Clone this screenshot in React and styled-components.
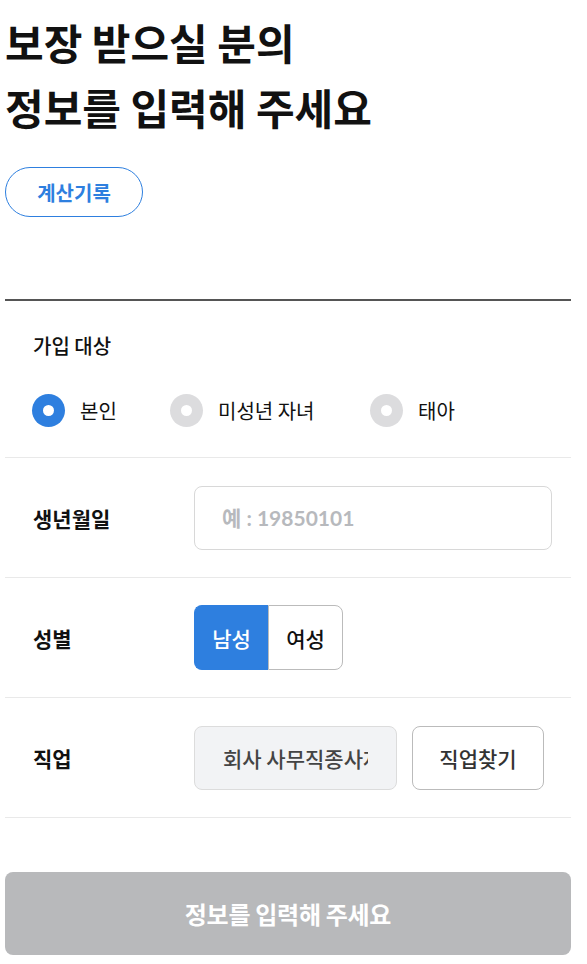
import React, { useState } from 'react';
import styled, { createGlobalStyle } from 'styled-components';

const BLUE = '#2e7fdf';

const GlobalStyle = createGlobalStyle`
  html, body {
    margin: 0;
    padding: 0;
    background: #fff;
  }
  body {
    font-family: 'Noto Sans CJK KR', 'Noto Sans', sans-serif;
    color: #111;
  }
  * {
    box-sizing: border-box;
  }
`;

const Page = styled.div`
  width: 587px;
  padding: 9px 16px 0 5px;
`;

const Title = styled.h1`
  margin: 0;
  font-size: 42px;
  line-height: 65px;
  font-weight: 700;
  color: #111;
`;

const HistoryButton = styled.button`
  display: block;
  margin-top: 28px;
  width: 138px;
  height: 50px;
  border: 1px solid ${BLUE};
  border-radius: 25px;
  background: #fff;
  color: ${BLUE};
  font-family: inherit;
  font-size: 20px;
  font-weight: 700;
  cursor: pointer;
`;

const Form = styled.div`
  margin-top: 82px;
  border-top: 2px solid #555;
`;

const TargetSection = styled.div`
  padding: 31px 0 31px 27px;
  border-bottom: 1px solid #e9e9e9;
`;

const SectionLabel = styled.div`
  font-size: 20px;
  font-weight: 500;
  line-height: 28px;
  padding-left: 1px;
`;

const RadioGroup = styled.div`
  display: flex;
  margin-top: 34px;
  height: 32px;
  align-items: center;
`;

const RadioItem = styled.label`
  display: flex;
  align-items: center;
  gap: 15px;
  width: ${(p) => p.$width}px;
  font-size: 20px;
  cursor: pointer;
`;

const RadioDot = styled.span`
  flex: none;
  width: 33px;
  height: 33px;
  border-radius: 50%;
  background: ${(p) => (p.$on ? BLUE : '#dcdcde')};
  display: flex;
  align-items: center;
  justify-content: center;
  &::after {
    content: '';
    width: 11px;
    height: 11px;
    border-radius: 50%;
    background: #fff;
  }
`;

const Row = styled.div`
  display: flex;
  align-items: center;
  height: 120px;
  padding-left: 27px;
  border-bottom: 1px solid #e9e9e9;
`;

const RowLabel = styled.div`
  width: 162px;
  font-size: 21px;
  font-weight: 700;
  padding-left: 1px;
`;

const TextInput = styled.input`
  width: 358px;
  height: 64px;
  border: 1px solid #d8d8d8;
  border-radius: 8px;
  padding: 0 27px;
  font-family: 'Lato', 'Noto Sans CJK KR', sans-serif;
  font-size: 21px;
  font-weight: 700;
  color: #333;
  outline: none;
  &::placeholder {
    color: #b7b9bd;
  }
`;

const Toggle = styled.div`
  display: flex;
  height: 65px;
`;

const ToggleButton = styled.button`
  width: 75px;
  height: 100%;
  padding: 0;
  font-family: inherit;
  font-size: 21px;
  font-weight: 500;
  cursor: pointer;
  border: 1px solid ${(p) => (p.$on ? BLUE : '#bbb')};
  background: ${(p) => (p.$on ? BLUE : '#fff')};
  color: ${(p) => (p.$on ? '#fff' : '#111')};
  &:first-child {
    border-radius: 8px 0 0 8px;
    border-right: none;
    width: 74px;
  }
  &:last-child {
    border-radius: 0 8px 8px 0;
  }
`;

const JobField = styled.input`
  width: 203px;
  height: 64px;
  border: 1px solid #dcdcdc;
  border-radius: 8px;
  background: #f2f3f5;
  padding: 0 28px;
  font-family: inherit;
  font-size: 21px;
  font-weight: 500;
  color: #444;
  outline: none;
`;

const FindButton = styled.button`
  margin-left: 15px;
  width: 132px;
  height: 64px;
  padding: 0;
  border: 1px solid #bbb;
  border-radius: 8px;
  background: #fff;
  font-family: inherit;
  font-size: 21px;
  font-weight: 500;
  color: #333;
  cursor: pointer;
`;

const SubmitButton = styled.button`
  display: block;
  width: 100%;
  height: 83px;
  margin-top: 54px;
  border: none;
  border-radius: 8px;
  background: #b8b9bb;
  color: #fff;
  font-family: inherit;
  font-size: 24px;
  font-weight: 700;
  letter-spacing: -0.3px;
`;

const targets = [
  { key: 'self', label: '본인', width: 138 },
  { key: 'child', label: '미성년 자녀', width: 200 },
  { key: 'fetus', label: '태아', width: 120 },
];

export default function App() {
  const [target, setTarget] = useState('self');
  const [gender, setGender] = useState('m');

  return (
    <Page>
      <GlobalStyle />
      <Title>
        보장 받으실 분의
        <br />
        정보를 입력해 주세요
      </Title>
      <HistoryButton>계산기록</HistoryButton>

      <Form>
        <TargetSection>
          <SectionLabel>가입 대상</SectionLabel>
          <RadioGroup>
            {targets.map((t) => (
              <RadioItem key={t.key} $width={t.width} onClick={() => setTarget(t.key)}>
                <RadioDot $on={target === t.key} />
                {t.label}
              </RadioItem>
            ))}
          </RadioGroup>
        </TargetSection>

        <Row>
          <RowLabel>생년월일</RowLabel>
          <TextInput placeholder="예 : 19850101" />
        </Row>

        <Row>
          <RowLabel>성별</RowLabel>
          <Toggle>
            <ToggleButton $on={gender === 'm'} onClick={() => setGender('m')}>
              남성
            </ToggleButton>
            <ToggleButton $on={gender === 'f'} onClick={() => setGender('f')}>
              여성
            </ToggleButton>
          </Toggle>
        </Row>

        <Row>
          <RowLabel>직업</RowLabel>
          <JobField readOnly value="회사 사무직종사자" />
          <FindButton>직업찾기</FindButton>
        </Row>
      </Form>

      <SubmitButton disabled>정보를 입력해 주세요</SubmitButton>
    </Page>
  );
}
